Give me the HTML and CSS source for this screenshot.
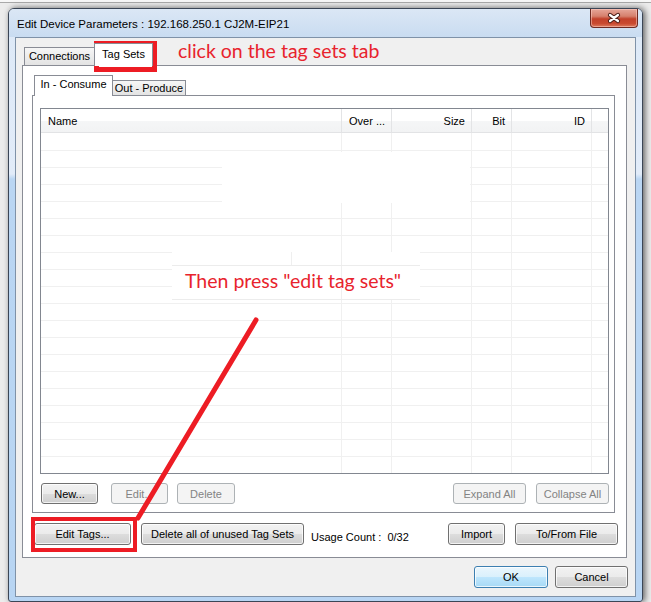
FILE: index.html
```html
<!DOCTYPE html>
<html lang="en">
<head>
	<meta charset="UTF-8">
	<link rel="stylesheet" href="styles.css">
	<title>Edit Device Parameters</title>
</head>
<body>

<div class="window">
	<div class="titlebar">
		<span class="title">Edit Device Parameters : 192.168.250.1 CJ2M-EIP21</span>
		<span class="close-btn">
			<svg width="16" height="12" viewBox="-8 -6 16 12">
				<path d="M-4 -3 L4 3 M-4 3 L4 -3" stroke="#4a1d17" stroke-width="4.2" stroke-linecap="round"/>
				<path d="M-4 -3 L4 3 M-4 3 L4 -3" stroke="#fff" stroke-width="2.2" stroke-linecap="round"/>
			</svg>
		</span>
	</div>

	<div class="client">
		<div class="outer-tabs">
			<div class="tab-strip">
				<span class="tab tab-conn">Connections</span>
				<span class="tab active tab-tags">Tag Sets</span>
			</div>
			<div class="outer-panel">

				<div class="inner-tabs">
					<div class="tab-strip">
						<span class="tab active tab-in">In - Consume</span>
						<span class="tab tab-out">Out - Produce</span>
					</div>
					<div class="inner-panel">
						<div class="list">
							<div class="list-head">
								<span class="col col-name">Name</span>
								<span class="col col-over">Over ...</span>
								<span class="col col-size right">Size</span>
								<span class="col col-bit right">Bit</span>
								<span class="col col-id right">ID</span>
								<span class="col col-rest"></span>
							</div>
							<div class="list-body">
								<div class="patch patch-top"></div>
								<div class="patch patch-note">Then press "edit tag sets"</div>
							</div>
						</div><!-- end of list -->

						<div class="btn-row">
							<button class="btn btn-new">New...</button>
							<button class="btn btn-edit" disabled>Edit...</button>
							<button class="btn btn-del" disabled>Delete</button>
							<button class="btn btn-expand" disabled>Expand All</button>
							<button class="btn btn-collapse" disabled>Collapse All</button>
						</div>
					</div><!-- end of inner-panel -->
				</div>

				<div class="btn-row tag-row">
					<button class="btn btn-tags">Edit Tags...</button>
					<button class="btn btn-unused">Delete all of unused Tag Sets</button>
					<span class="usage">Usage Count :&nbsp; 0/32</span>
					<button class="btn btn-import">Import</button>
					<button class="btn btn-file">To/From File</button>
				</div>

			</div><!-- end of outer-panel -->
		</div>

		<div class="dialog-btns">
			<button class="btn btn-ok">OK</button>
			<button class="btn btn-cancel">Cancel</button>
		</div>
	</div><!-- end of client -->
</div><!-- end of window -->

<!-- annotations drawn over the screenshot -->
<div class="mark mark-tab"></div>
<div class="mark mark-edit"></div>
<span class="note note-tab">click on the tag sets tab</span>
<svg class="arrow" width="651" height="602">
	<line x1="256" y1="320" x2="138" y2="518" stroke="#ed1c24" stroke-width="5" stroke-linecap="round"/>
</svg>

</body>
</html>
```

FILE: styles.css
```css
body {
	margin: 0;
	height: 602px;
	overflow: hidden;
	position: relative;
	background: linear-gradient(#f7f7f7 0 2px, #a9a9a9 2px 3px, #ececec 3px);
	font-family: "Liberation Sans", Arial, sans-serif;
	font-size: 11px;
	color: #000;
}

.window {
	width: 635px;
	height: 594px;
	margin: 8px 0 0 8px;
	box-sizing: border-box;
	border: 1px solid #3b4656;
	border-radius: 6px 6px 3px 3px;
	padding: 0 6px 4px 6px;
	background: linear-gradient(#dde9f7 0, #e2ecf9 165px, #bad6f3 170px, #b8d5f3 100%);
	box-shadow: 2px 0 6px rgba(0, 0, 0, .6);
}

.titlebar {
	display: flex;
	justify-content: space-between;
	height: 28px;
	margin: 0 -6px;
	padding: 0 4px 0 8px;
	border-radius: 5px 5px 0 0;
	background: linear-gradient(#dbe7f5, #c9dcf1);
}
	.title {
		align-self: center;
		font-size: 11.5px;
		color: #000;
		margin-top: 1px;
	}

.close-btn {
	display: flex;
	align-items: center;
	justify-content: center;
	width: 48px;
	height: 19px;
	box-sizing: border-box;
	border: 1px solid #6e2a22;
	border-top: 0;
	border-radius: 0 0 4px 4px;
	background: linear-gradient(#e6a699 0, #d6806d 40%, #c2412b 55%, #c9492f 80%, #dc7a5e 100%);
	box-shadow: inset 0 0 0 1px rgba(255, 210, 200, .5);
}

.client {
	height: 560px;
	box-sizing: border-box;
	border: 1px solid #7f92a8;
	background: #f0f0f0;
	padding: 5px 7px 0 6px;
}

/* tabs */

.tab-strip {
	display: flex;
	align-items: flex-end;
}

.tab {
	box-sizing: border-box;
	border: 1px solid #898c95;
	border-bottom: 0;
	background: linear-gradient(#f6f6f6, #e3e3e3);
	text-align: center;
	white-space: nowrap;
}
	.tab.active {
		background: #fff;
		position: relative;
		z-index: 1;
		margin-bottom: -1px;
	}

.outer-tabs {
	width: 605px;
}
	.outer-tabs .tab-strip {
		padding-left: 2px;
	}

.tab-conn {
	width: 71px;
	height: 18px;
	line-height: 17px;
}
.tab-tags {
	width: 59px;
	height: 23px;
	line-height: 21px;
	margin-left: -1px;
}

.outer-panel {
	height: 493px;
	box-sizing: border-box;
	border: 1px solid #898c95;
	background: #fff;
	padding: 9px 11px 0 9px;
}

.tab-in {
	width: 79px;
	height: 21px;
	line-height: 17px;
}
.tab-out {
	width: 74px;
	height: 15px;
	line-height: 14px;
	margin-left: -1px;
}

.inner-panel {
	height: 418px;
	box-sizing: border-box;
	border: 1px solid #898c95;
	padding: 12px 5px 0 7px;
}

/* list view */

.list {
	height: 366px;
	box-sizing: border-box;
	border: 1px solid #828790;
	background: #fff;
}

.list-head {
	display: flex;
	height: 24px;
	box-sizing: border-box;
	line-height: 25px;
	border-bottom: 1px solid #e2e3e5;
	background: linear-gradient(#fff 0, #fff 50%, #f5f6f7 51%, #f2f3f4 100%);
}
	.col {
		box-sizing: border-box;
		height: 23px;
		padding: 0 6px 0 7px;
		border-right: 1px solid #e3e4e6;
		white-space: nowrap;
		overflow: hidden;
	}
	.right {
		text-align: right;
	}
	.col-name { width: 301px; }
	.col-over { width: 50px; }
	.col-size { width: 80px; }
	.col-bit  { width: 40px; }
	.col-id   { width: 80px; }
	.col-rest { width: 16px; border-right: 0; }

.list-body {
	position: relative;
	height: 340px;
	background:
		linear-gradient(to right,
			transparent 300px, #f0f0f0 300px 301px,
			transparent 301px 350px, #f0f0f0 350px 351px,
			transparent 351px 430px, #f0f0f0 430px 431px,
			transparent 431px 470px, #f0f0f0 470px 471px,
			transparent 471px 550px, #f0f0f0 550px 551px,
			transparent 551px),
		repeating-linear-gradient(transparent 0 16px, #f0f0f0 16px 17px) 0 1px / 100% 100% no-repeat;
}

/* erased spots left by the screenshot editing */
.patch {
	position: absolute;
	background-color: #fff;
}
.patch-top {
	left: 181px;
	top: 19px;
	width: 248px;
	height: 51px;
}
.patch-note {
	left: 131px;
	top: 119px;
	width: 248px;
	height: 48px;
	box-sizing: border-box;
	padding: 18px 0 0 13px;
	background-image:
		linear-gradient(#ececec, #ececec),
		linear-gradient(#ececec, #ececec),
		linear-gradient(#efefef, #efefef),
		linear-gradient(#efefef, #efefef);
	background-size: 100% 1px, 100% 1px, 1px 13px, 1px 100%;
	background-position: 0 13px, 0 47px, 119px 0, 169px 0;
	background-repeat: no-repeat;
	font-family: Lato, "Liberation Sans", sans-serif;
	font-size: 19.5px;
	line-height: 22px;
	color: #e8232d;
	white-space: nowrap;
}

/* buttons */

.btn-row {
	display: flex;
	margin-top: 9px;
}

.btn {
	box-sizing: border-box;
	height: 21px;
	padding: 0;
	border: 1px solid #707070;
	border-radius: 3px;
	background: linear-gradient(#f2f2f2 0, #ebebeb 50%, #dddddd 50%, #cfcfcf 100%);
	box-shadow: inset 0 0 0 1px rgba(255, 255, 255, .75);
	font: inherit;
	color: #000;
	white-space: nowrap;
}
	.btn:disabled {
		border-color: #adb2b5;
		background: #f4f4f4;
		box-shadow: none;
		color: #838383;
	}

.btn-new      { width: 57px; margin-left: 1px; }
.btn-edit     { width: 57px; margin-left: 13px; }
.btn-del      { width: 58px; margin-left: 9px; }
.btn-expand   { width: 73px; margin-left: auto; }
.btn-collapse { width: 73px; margin-left: 10px; }

.tag-row {
	margin-top: 10px;
	margin-right: -3px;
}
	.tag-row .btn {
		height: 22px;
	}
.btn-tags   { width: 97px; margin-left: 2px; }
.btn-unused { width: 163px; margin-left: 10px; }
.btn-import { width: 57px; margin-left: auto; }
.btn-file   { width: 103px; margin-left: 10px; }

.usage {
	margin: 3px 0 0 7px;
	line-height: 22px;
	white-space: nowrap;
}

.dialog-btns {
	display: flex;
	justify-content: flex-end;
	margin-top: 8px;
}
	.dialog-btns .btn {
		height: 22px;
	}
.btn-ok {
	width: 74px;
	border-color: #3c7fb1;
	background: linear-gradient(#eaf6fd 0, #d9f0fc 50%, #bee6fd 50%, #a7d9f5 100%);
}
.btn-cancel {
	width: 73px;
	margin-left: 7px;
}

/* annotations */

.mark {
	position: absolute;
	box-sizing: border-box;
	border: 4px solid #ed1c24;
}
.mark-tab {
	left: 94px;
	top: 41px;
	width: 63px;
	height: 31px;
	border-width: 5px;
}
.mark-edit {
	left: 31px;
	top: 517px;
	width: 106px;
	height: 35px;
}

.note {
	position: absolute;
	font-family: Lato, "Liberation Sans", sans-serif;
	font-size: 19.5px;
	line-height: 22px;
	color: #e8232d;
	white-space: nowrap;
}
.note-tab {
	left: 178px;
	top: 40px;
}

.arrow {
	position: absolute;
	left: 0;
	top: 0;
	pointer-events: none;
}
```
